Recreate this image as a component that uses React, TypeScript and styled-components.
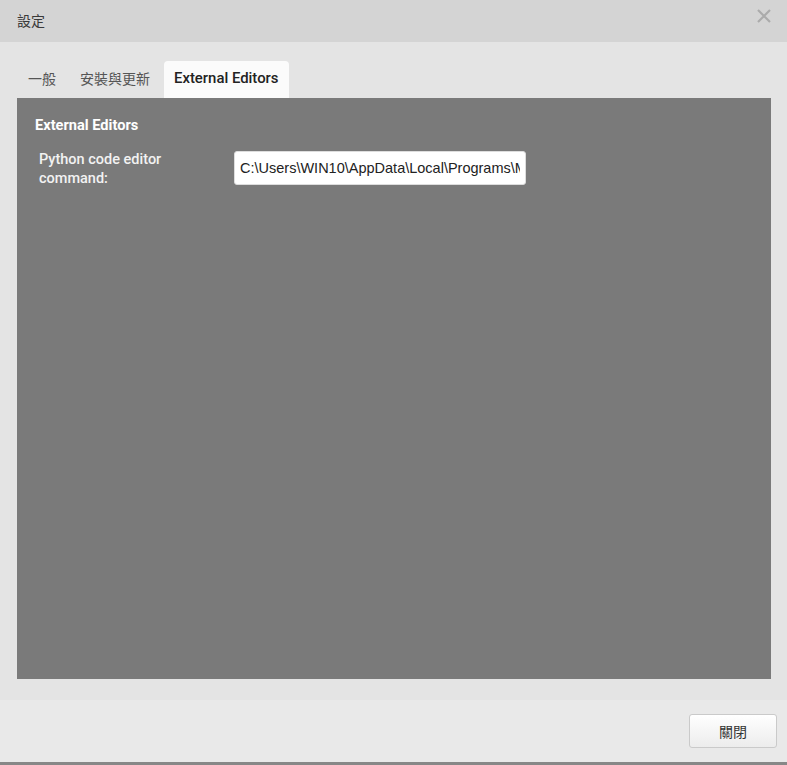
import React from "react";
import styled, { createGlobalStyle } from "styled-components";

const Global = createGlobalStyle`
  html, body { margin: 0; padding: 0; }
  body { font-family: Roboto, "Noto Sans CJK TC", sans-serif; background: #e4e4e4; }
  * { box-sizing: border-box; }
`;

const Dialog = styled.div`
  width: 787px;
  height: 765px;
  display: flex;
  flex-direction: column;
  background: #e4e4e4;
  border-bottom: 3px solid #878787;
`;

const Header = styled.div`
  height: 42px;
  flex: none;
  background: #d4d4d4;
  display: flex;
  align-items: center;
  justify-content: space-between;
  padding: 0 15px 0 17px;
`;

const Title = styled.div`
  font-family: "Noto Sans CJK TC", sans-serif;
  font-size: 14px;
  color: #3a3a3a;
  margin-top: -2px;
`;

const Close = styled.button`
  border: none;
  background: none;
  padding: 0;
  width: 16px;
  height: 16px;
  margin-top: -10px;
  display: flex;
  align-items: center;
  justify-content: center;
`;

const Body = styled.div`
  flex: 1;
  display: flex;
  flex-direction: column;
  padding: 19px 16px 21px 17px;
`;

const Tabs = styled.div`
  display: flex;
  align-items: flex-end;
  height: 37px;
  padding-left: 1px;
`;

const Tab = styled.div<{ $active?: boolean }>`
  height: 37px;
  display: flex;
  align-items: center;
  padding: 0 10px 3px;
  margin-right: ${(p) => (p.$active ? "0" : "4px")};
  font-family: Roboto, "Noto Sans CJK TC", sans-serif;
  font-size: ${(p) => (p.$active ? "14.9px" : "14px")};
  font-weight: ${(p) => (p.$active ? 500 : 400)};
  color: ${(p) => (p.$active ? "#222" : "#555")};
  background: ${(p) => (p.$active ? "#fbfbfb" : "transparent")};
  border-radius: 4px 4px 0 0;
`;

const Panel = styled.div`
  flex: 1;
  background: #7a7a7a;
  padding: 19px 18px;
  display: flex;
  flex-direction: column;
`;

const PanelTitle = styled.div`
  font-family: Roboto, sans-serif;
  font-weight: 700;
  font-size: 14.6px;
  line-height: 17px;
  color: #fff;
  margin-bottom: 15px;
`;

const Row = styled.div`
  display: flex;
  align-items: flex-start;
  padding-left: 4px;
`;

const Label = styled.div`
  width: 195px;
  padding-top: 1px;
  font-family: Roboto, sans-serif;
  font-size: 14.5px;
  line-height: 19px;
  color: #f2f2f2;
  font-weight: 500;
`;

const Input = styled.input`
  width: 292px;
  height: 34px;
  margin-top: 2px;
  border: 1px solid #ddd;
  border-radius: 3px;
  background: #fff;
  padding: 0 5px;
  font-family: "Liberation Sans", Arial, sans-serif;
  font-size: 14.5px;
  color: #222;
  outline: none;
`;

const Footer = styled.div`
  height: 62px;
  flex: none;
  background: #e9e9e9;
  display: flex;
  align-items: flex-start;
  justify-content: flex-end;
  padding: 14px 10px 0 0;
`;

const Button = styled.button`
  width: 88px;
  height: 34px;
  border: 1px solid #cacaca;
  border-radius: 3px;
  background: linear-gradient(#ffffff, #ececec);
  font-family: "Noto Sans CJK TC", sans-serif;
  font-size: 14px;
  color: #333;
`;

export default function App() {
  return (
    <>
      <Global />
      <Dialog>
        <Header>
          <Title>設定</Title>
          <Close aria-label="close">
            <svg width="14" height="14" viewBox="0 0 14 14">
              <path d="M1 1L13 13M13 1L1 13" stroke="#ababab" strokeWidth="2.2" />
            </svg>
          </Close>
        </Header>
        <Body>
          <Tabs>
            <Tab>一般</Tab>
            <Tab>安裝與更新</Tab>
            <Tab $active>External Editors</Tab>
          </Tabs>
          <Panel>
            <PanelTitle>External Editors</PanelTitle>
            <Row>
              <Label>
                Python code editor
                <br />
                command:
              </Label>
              <Input defaultValue="C:\Users\WIN10\AppData\Local\Programs\Microsoft VS Code\Code.exe" />
            </Row>
          </Panel>
        </Body>
        <Footer>
          <Button>關閉</Button>
        </Footer>
      </Dialog>
    </>
  );
}
